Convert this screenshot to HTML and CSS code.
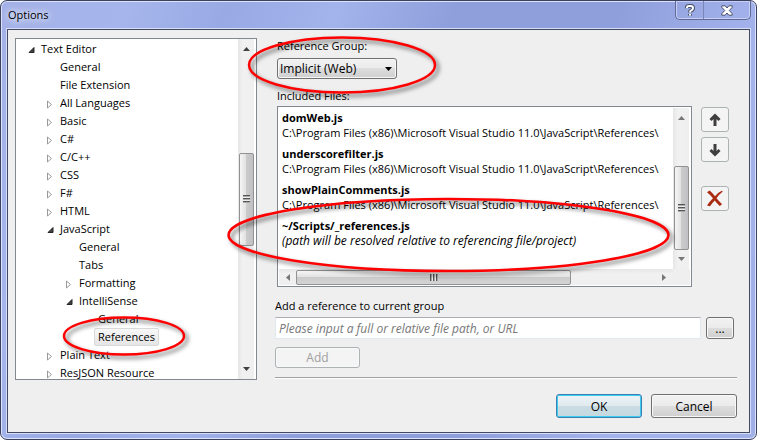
FILE: index.html
```html
<!DOCTYPE html>
<html lang="en">
<head>
<meta charset="utf-8">
<title>Options</title>
<link rel="stylesheet" href="styles.css">
</head>
<body>
<div class="window">
  <header class="titlebar">
    <h1 class="title">Options</h1>
    <div class="caption-buttons">
      <button class="caption help" type="button" aria-label="Help">
        <svg width="10" height="13" viewBox="0 0 10 13"><path class="glyph-edge" d="M2 4.200V3.200Q2.200 2 4 2h1.500Q8 2 8 4t-2 2.600Q5 7 5 8.500M5 10v1.500"/><path class="glyph-fill" d="M2 4.200V3.200Q2.200 2 4 2h1.500Q8 2 8 4t-2 2.600Q5 7 5 8.500M5 10v1.500"/></svg>
      </button>
      <button class="caption close" type="button" aria-label="Close">
        <svg width="12" height="11" viewBox="0 0 12 11"><path class="x-glyph" d="M.8.8h3.400L6 3l1.800-2.200h3.400v1.500L8.300 5.500l2.900 3.200v1.500H7.800L6 8l-1.800 2.200H.8V8.700l2.900-3.200L.8 2.300z"/></svg>
      </button>
    </div>
  </header>

  <main class="client">
    <div class="panes">
      <nav class="tree-box" aria-label="Option pages">
        <ul class="tree">
          <li><div class="row"><svg class="twisty" viewBox="0 0 9 9"><path class="open" d="M6 1.500v5H1z"/></svg><span class="label">Text Editor</span></div>
            <ul>
              <li><div class="row leaf"><span class="label">General</span></div></li>
              <li><div class="row leaf"><span class="label">File Extension</span></div></li>
              <li><div class="row"><svg class="twisty" viewBox="0 0 9 9"><path class="shut" d="M.5 1v7l4-3.500z"/></svg><span class="label">All Languages</span></div></li>
              <li><div class="row"><svg class="twisty" viewBox="0 0 9 9"><path class="shut" d="M.5 1v7l4-3.500z"/></svg><span class="label">Basic</span></div></li>
              <li><div class="row"><svg class="twisty" viewBox="0 0 9 9"><path class="shut" d="M.5 1v7l4-3.500z"/></svg><span class="label">C#</span></div></li>
              <li><div class="row"><svg class="twisty" viewBox="0 0 9 9"><path class="shut" d="M.5 1v7l4-3.500z"/></svg><span class="label">C/C++</span></div></li>
              <li><div class="row"><svg class="twisty" viewBox="0 0 9 9"><path class="shut" d="M.5 1v7l4-3.500z"/></svg><span class="label">CSS</span></div></li>
              <li><div class="row"><svg class="twisty" viewBox="0 0 9 9"><path class="shut" d="M.5 1v7l4-3.500z"/></svg><span class="label">F#</span></div></li>
              <li><div class="row"><svg class="twisty" viewBox="0 0 9 9"><path class="shut" d="M.5 1v7l4-3.500z"/></svg><span class="label">HTML</span></div></li>
              <li><div class="row"><svg class="twisty" viewBox="0 0 9 9"><path class="open" d="M6 1.500v5H1z"/></svg><span class="label">JavaScript</span></div>
                <ul>
                  <li><div class="row leaf"><span class="label">General</span></div></li>
                  <li><div class="row leaf"><span class="label">Tabs</span></div></li>
                  <li><div class="row"><svg class="twisty" viewBox="0 0 9 9"><path class="shut" d="M.5 1v7l4-3.500z"/></svg><span class="label">Formatting</span></div></li>
                  <li><div class="row"><svg class="twisty" viewBox="0 0 9 9"><path class="open" d="M6 1.500v5H1z"/></svg><span class="label">IntelliSense</span></div>
                    <ul>
                      <li><div class="row leaf"><span class="label">General</span></div></li>
                      <li><div class="row leaf"><span class="label selected">References</span></div></li>
                    </ul>
                  </li>
                </ul>
              </li>
              <li><div class="row"><svg class="twisty" viewBox="0 0 9 9"><path class="shut" d="M.5 1v7l4-3.500z"/></svg><span class="label">Plain Text</span></div></li>
              <li><div class="row"><svg class="twisty" viewBox="0 0 9 9"><path class="shut" d="M.5 1v7l4-3.500z"/></svg><span class="label">ResJSON Resource</span></div></li>
            </ul>
          </li>
        </ul>
        <div class="vbar">
          <svg class="tip" viewBox="0 0 7 4"><path d="M0 4 3.500 0 7 4z"/></svg>
          <div class="vtrack tree-track"><div class="thumb vthumb"><span class="grip"></span></div></div>
          <svg class="tip" viewBox="0 0 7 4"><path d="M0 0h7L3.500 4z"/></svg>
        </div>
      </nav>

      <section class="page">
        <div class="group">
          <label class="caption-text" for="group">Reference Group:</label>
          <div class="combo">
            <select id="group"><option>Implicit (Web)</option></select>
            <svg class="combo-arrow" viewBox="0 0 7 4"><path d="M0 0h7L3.500 4z"/></svg>
          </div>
          <p class="caption-text files-label" id="files-label">Included Files:</p>
          <div class="files-row">
            <div class="list-box">
              <ul class="files" aria-labelledby="files-label">
                <li><strong>domWeb.js</strong><span>C:\Program Files (x86)\Microsoft Visual Studio 11.0\JavaScript\References\</span></li>
                <li><strong>underscorefilter.js</strong><span>C:\Program Files (x86)\Microsoft Visual Studio 11.0\JavaScript\References\</span></li>
                <li><strong>showPlainComments.js</strong><span>C:\Program Files (x86)\Microsoft Visual Studio 11.0\JavaScript\References\</span></li>
                <li><strong>~/Scripts/_references.js</strong><em>(path will be resolved relative to referencing file/project)</em></li>
              </ul>
              <div class="vbar">
                <svg class="tip faint" viewBox="0 0 7 4"><path d="M0 4 3.500 0 7 4z"/></svg>
                <div class="vtrack files-track"><div class="thumb vthumb"><span class="grip"></span></div></div>
                <svg class="tip faint" viewBox="0 0 7 4"><path d="M0 0h7L3.500 4z"/></svg>
              </div>
              <div class="hbar">
                <svg class="side-tip" viewBox="0 0 4 7"><path d="M4 0v7L0 3.500z"/></svg>
                <div class="htrack"><div class="thumb hthumb"><span class="grip upright"></span></div></div>
                <svg class="side-tip" viewBox="0 0 4 7"><path d="M0 0v7l4-3.500z"/></svg>
              </div>
              <div class="corner"></div>
            </div>
            <div class="tools">
              <button class="tool" type="button" aria-label="Move up"><svg width="12" height="14" viewBox="0 0 12 14"><path class="arrow" d="M6 13V2.500M1.500 7 6 2.500 10.500 7"/></svg></button>
              <button class="tool" type="button" aria-label="Move down"><svg width="12" height="14" viewBox="0 0 12 14"><path class="arrow" d="M6 1v10.500M1.500 7 6 11.500 10.500 7"/></svg></button>
              <button class="tool remove" type="button" aria-label="Remove"><svg width="18" height="17" viewBox="0 0 18 17"><path fill="#a92c12" d="M1 2.200 3.600.6Q6.500 3 9 6.300 12 2.500 15.800.8l1 .7Q13 4.500 10.500 8.200q2.600 3 5.600 6L13.700 16Q11 13.600 8.700 10.600 6 13.500 4 16.300L1 15.600Q3.600 11.500 7 8.300 4.500 5 1 2.200z"/></svg></button>
            </div>
          </div>
        </div>

        <form class="add-form">
          <label class="add-label" for="path">Add a reference to current group</label>
          <div class="path-row">
            <input class="path" id="path" type="text" placeholder="Please input a full or relative file path, or URL">
            <button class="button browse" type="button" aria-label="Browse">...</button>
          </div>
          <button class="button add" type="button" disabled>Add</button>
        </form>
        <hr class="rule">
      </section>
    </div>

    <footer class="actions">
      <button class="button wide default" type="button">OK</button>
      <button class="button wide" type="button">Cancel</button>
    </footer>
  </main>

  <svg class="markup" width="757" height="440" viewBox="0 0 757 440" aria-hidden="true">
    <ellipse cx="342" cy="65" rx="93" ry="27.500"/>
    <ellipse cx="448.500" cy="235" rx="220" ry="36"/>
    <ellipse cx="124" cy="336" rx="60" ry="18.500"/>
  </svg>
</div>
</body>
</html>
```

FILE: styles.css
```css
* { box-sizing: border-box; }

body {
  margin: 0;
  background: #fff;
  color: #000;
  font: 11px/15px "Open Sans", "Noto Sans", sans-serif;
}

ul { list-style: none; margin: 0; padding: 0; }
p { margin: 0; }
svg { display: block; }
button, select, input { font: inherit; font-size: 12px; color: inherit; }

/* Window frame */
.window {
  position: relative;
  display: flex;
  flex-direction: column;
  height: 100vh;
  min-height: 440px;
  padding: 0 5px 5px;
  border: 1px solid #3c4160;
  border-radius: 7px;
  background: linear-gradient(110deg, #a3b1e7 0, #a6b6ec 14%, #98a9e4 25%, #a3b3eb 37%, #8f9fdc 50%, #8f9fdc 68%, #a4b3ec 84%, #a0afe6 100%);
  box-shadow: inset 0 0 0 1px #dce3fa;
}

.titlebar {
  display: flex;
  justify-content: space-between;
  align-items: flex-start;
  height: 27px;
  flex: none;
}

.title {
  margin: 0;
  padding: 6px 2px 0;
  font-size: 11px;
  line-height: 16px;
  font-weight: 400;
  text-shadow: 0 0 6px #fff, 0 0 10px #fff;
}

.caption-buttons {
  display: flex;
  border: 1px solid #606a94;
  border-top: 0;
  border-radius: 0 0 5px 5px;
  box-shadow: inset 0 0 0 1px #c6d0f6;
}

.caption {
  display: grid;
  place-items: center;
  height: 18px;
  padding: 0;
  border: 0;
  background: none;
}
.help { width: 28px; border-right: 1px solid #7985b5; }
.close { width: 46px; }
.glyph-edge { fill: none; stroke: #4a506c; stroke-width: 4; }
.glyph-fill { fill: none; stroke: #fff; stroke-width: 2; }
.x-glyph { fill: #fff; stroke: #4a506c; }

/* Client area */
.client {
  display: flex;
  flex-direction: column;
  flex: 1;
  min-height: 0;
  margin: 1px;
  padding: 8px 12px 14px 7px;
  border: 1px solid #434961;
  background: #efefef;
  box-shadow: 0 0 0 1px #d5ddf8;
}

.panes {
  display: flex;
  gap: 18px;
  flex: 1;
  min-height: 0;
}

.tree-box {
  display: flex;
  flex: none;
  width: 242px;
  padding-right: 2px;
  border: 1px solid #828790;
  background: #fff;
  overflow: hidden;
}

.tree { flex: 1; padding: 1px 0 0 12px; }
.tree ul { padding-left: 19px; }
.row { display: flex; align-items: center; height: 18px; }
.leaf { padding-left: 9px; }
.twisty { width: 9px; height: 9px; margin-top: 2px; }
.open { fill: #404040; stroke: #262626; }
.shut { fill: #fff; stroke: #9a9a9a; }
.label {
  padding: 0 3px;
  border: 1px solid transparent;
  border-radius: 2px;
  line-height: 16px;
  white-space: nowrap;
}
.selected { border-color: #d9d9d9; background: linear-gradient(#f8f8f8, #e5e5e5); }

/* Scroll bars */
.vbar {
  display: flex;
  flex-direction: column;
  align-items: center;
  width: 16px;
  padding: 8px 0;
  background: linear-gradient(90deg, #e6e6e6, #f1f1f1 30%, #efefef);
}
.tip { width: 7px; height: 4px; fill: #404040; }
.faint { fill: #777; }
.vtrack { display: grid; flex: 1; width: 15px; }
.tree-track { grid-template-rows: 103fr 94fr 123fr; }
.files-track { grid-template-rows: 46fr 84fr 7fr; }
.thumb {
  display: grid;
  place-items: center;
  border: 1px solid #929292;
  border-radius: 2px;
}
.vthumb { grid-row: 2; background: linear-gradient(90deg, #f5f5f5, #e2e2e2 45%, #cbcbcb 50%, #c0c0c4); }
.hthumb { grid-column: 2; background: linear-gradient(#f5f5f5, #e2e2e2 45%, #cbcbcb 50%, #d4d4d4); }
.grip {
  width: 7px;
  height: 8px;
  background: repeating-linear-gradient(#555 0 1px, #aaa 1px 2px, #eee 2px 3px);
}
.upright {
  width: 8px;
  height: 7px;
  background: repeating-linear-gradient(90deg, #555 0 1px, #aaa 1px 2px, #eee 2px 3px);
}
.hbar {
  display: flex;
  align-items: center;
  padding: 0 7px;
  background: linear-gradient(#e6e6e6, #f1f1f1 30%, #efefef);
}
.side-tip { width: 4px; height: 7px; fill: #777; }
.htrack { display: grid; grid-template-columns: 6fr 272fr 90fr; flex: 1; height: 15px; }
.corner { background: #efefef; }

/* Reference page */
.page {
  display: flex;
  flex-direction: column;
  flex: 1;
  min-width: 0;
}
.group { padding-left: 2px; }
.caption-text { display: block; line-height: 16px; }

.combo { display: grid; align-items: center; width: 120px; margin-top: 4px; }
.combo select, .combo-arrow { grid-area: 1 / 1; }
.combo select {
  appearance: none;
  width: 100%;
  height: 21px;
  padding: 0 2px;
  border: 1px solid #707070;
  border-radius: 3px;
  background: linear-gradient(#f2f2f2, #ebebeb 48%, #dddddd 50%, #cfcfcf);
  box-shadow: inset 0 0 0 1px #f7f7f7;
}
.combo-arrow { justify-self: end; width: 7px; height: 4px; margin-right: 5px; pointer-events: none; }

.files-label { margin-top: 9px; }
.files-row { display: flex; gap: 9px; margin-top: 2px; padding-right: 8px; }

.list-box {
  display: grid;
  grid-template: 161px 16px / minmax(0, 1fr) 17px;
  flex: 1;
  min-width: 0;
  padding: 1px;
  border: 1px solid #828790;
  background: #fff;
}
.files { padding: 2px 0 0 3px; overflow: hidden; white-space: nowrap; }
.files li { height: 36px; }
.files strong, .files span, .files em { display: block; }
.files em { font-size: 12px; }

.tools { display: flex; flex-direction: column; gap: 5px; padding-top: 1px; }
.tool {
  display: grid;
  place-items: center;
  width: 28px;
  height: 25px;
  padding: 0;
  border: 1px solid #adb2b5;
  border-radius: 3px;
  background: #f4f4f4;
}
.remove { margin-top: 19px; }
.arrow { fill: none; stroke: #3f3f3f; stroke-width: 3; }

.add-form { margin-top: 11px; }
.add-label { display: block; line-height: 16px; }
.path-row { display: flex; gap: 5px; margin-top: 3px; padding-right: 3px; }
.path {
  flex: 1;
  min-width: 0;
  height: 22px;
  padding: 0 3px;
  border: 1px solid #e2e8f0;
  border-top-color: #abadb3;
  background: #fff;
}
.path::placeholder { color: #777; font-style: italic; opacity: 1; }

.button {
  padding: 0;
  border: 1px solid #707070;
  border-radius: 3px;
  background: linear-gradient(#f2f2f2, #ebebeb 48%, #dddddd 50%, #cfcfcf);
  box-shadow: inset 0 0 0 1px #f8f8f8;
}
.browse { width: 28px; height: 22px; }
.add { display: block; width: 85px; height: 21px; margin-top: 8px; border-color: #adb2b5; background: #f4f4f4; color: #a0a0a0; }
.rule {
  width: 100%;
  margin: 9px 0 0;
  border: 0;
  border-top: 1px solid #a0a0a0;
  border-bottom: 1px solid #fff;
}

.actions { display: flex; justify-content: flex-end; gap: 9px; margin-top: 14px; }
.wide { width: 86px; height: 24px; }
.default {
  border-color: #3c7fb1;
  background: linear-gradient(#edf3f6, #e0ebef 48%, #cbdce3 50%, #c5d9e1);
  box-shadow: inset 0 0 0 1px #3dcbf2;
}

/* Hand-drawn highlights over the dialog */
.markup {
  position: absolute;
  top: -1px;
  left: -1px;
  pointer-events: none;
}
.markup ellipse {
  fill: none;
  stroke: #f00;
  stroke-width: 2.5;
  filter: drop-shadow(3px 3px 2px rgba(0, 0, 0, .55));
}
```
